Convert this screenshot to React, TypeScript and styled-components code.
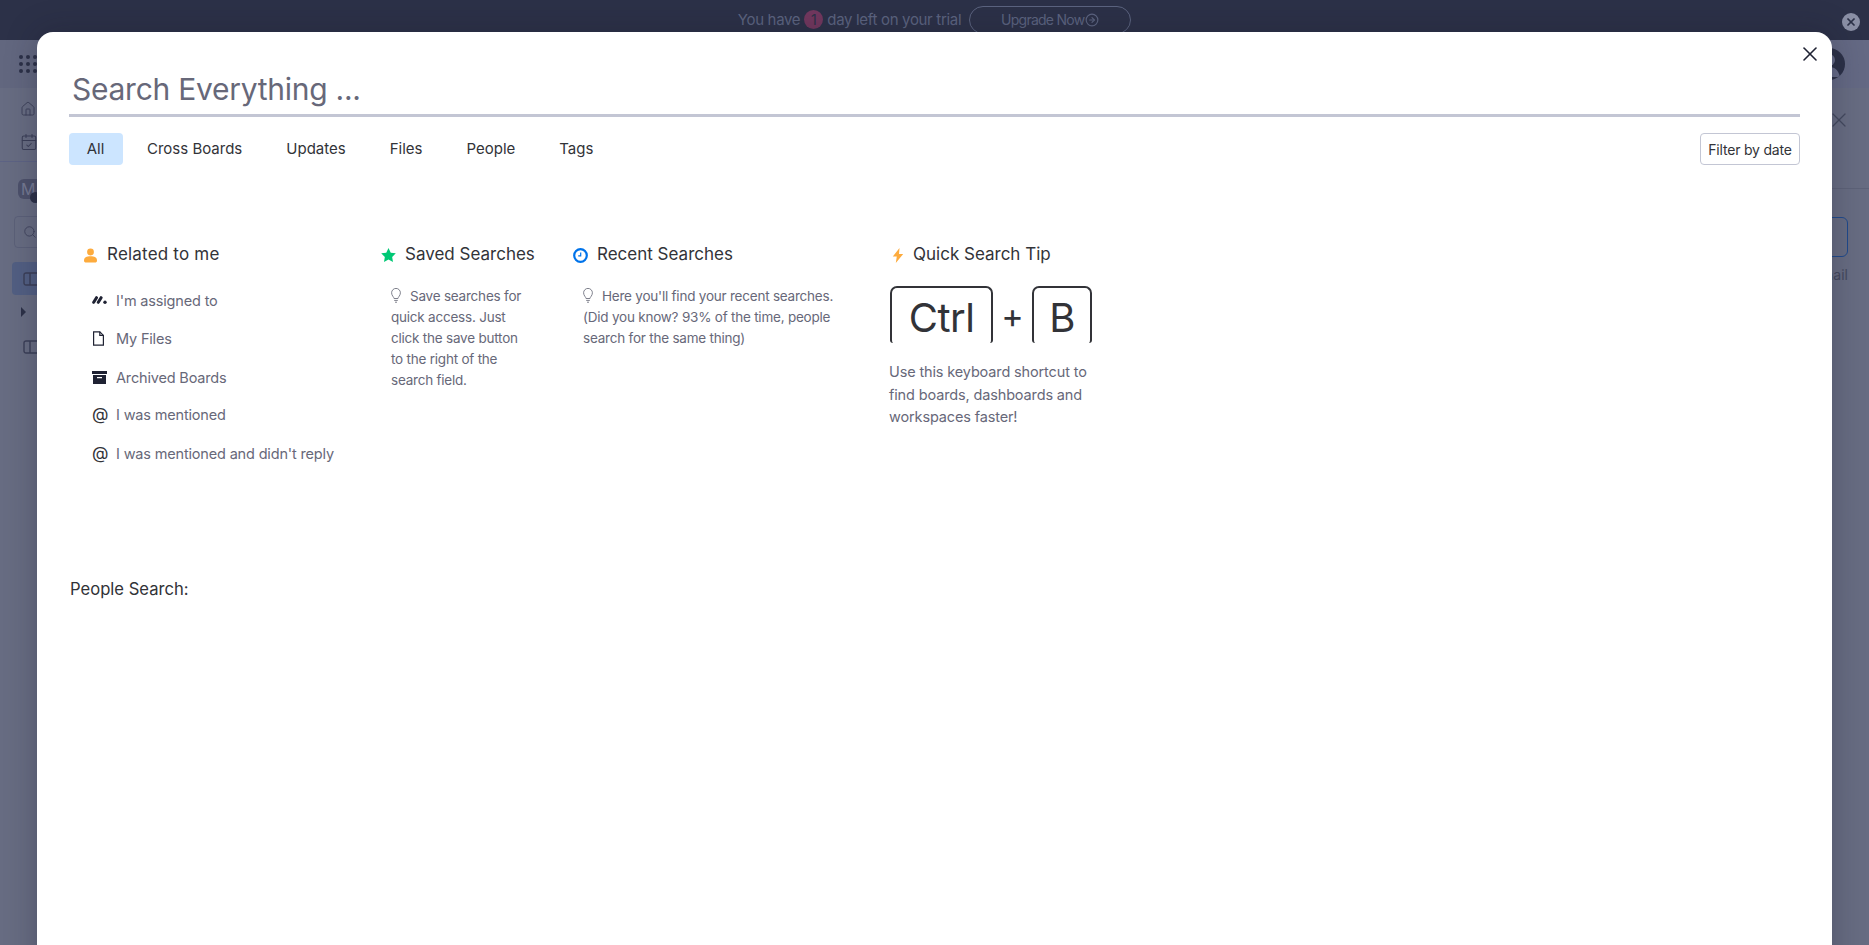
import React from "react";
import styled, { createGlobalStyle } from "styled-components";
import { X, Search, Home, CalendarCheck, ArrowRightCircle } from "lucide-react";

const FONT = `"Inter", "Liberation Sans", sans-serif`;

const Global = createGlobalStyle`
  html, body { margin: 0; padding: 0; height: 100%; overflow: hidden; background: #676c82; }
  * { box-sizing: border-box; }
  #root { height: 100%; }
`;

const Page = styled.div`
  position: relative;
  width: 100%;
  height: 100vh;
  overflow: hidden;
  display: flex;
  flex-direction: column;
  font-family: ${FONT};
  background: #676c82;
`;

/* ---- dimmed app behind the dialog ---- */
const Banner = styled.div`
  height: 40px;
  flex: none;
  background: #2c3148;
  color: #5c6480;
  display: flex;
  align-items: flex-start;
  justify-content: center;
  padding: 6px 0 0 0;
  font-size: 15px;
  position: relative;
`;
const BannerText = styled.div`
  display: flex;
  align-items: center;
  height: 28px;
  padding-bottom: 1px;
  gap: 4px;
  letter-spacing: -0.32px;
  margin-right: 8px;
`;
const DayBadge = styled.span`
  width: 19px;
  height: 19px;
  border-radius: 50%;
  background: #73385f;
  color: #2c3148;
  display: flex;
  align-items: center;
  justify-content: center;
  font-size: 14px;
`;
const UpgradeButton = styled.div`
  width: 162px;
  height: 28px;
  padding-bottom: 1px;
  border: 1px solid #5c6480;
  border-radius: 14px;
  display: flex;
  align-items: center;
  justify-content: center;
  gap: 1px;
  font-size: 14px;
  letter-spacing: -0.75px;
`;
const BannerDismiss = styled.div`
  position: absolute;
  right: 9px;
  top: 13px;
  width: 18px;
  height: 18px;
  border-radius: 50%;
  background: #8a8fa5;
  color: #2c3148;
  display: flex;
  align-items: center;
  justify-content: center;
`;
const AppHeader = styled.div`
  height: 48px;
  flex: none;
  background: linear-gradient(90deg, #62677f 0%, #646984 100%);
  display: flex;
  align-items: center;
  justify-content: space-between;
  padding: 0 24px 0 19px;
`;
const DotGrid = styled.div`
  display: grid;
  grid-template-columns: repeat(3, 4px);
  gap: 3px;
  span {
    width: 4px;
    height: 4px;
    border-radius: 50%;
    background: #2c3148;
  }
`;
const Avatar = styled.div`
  width: 32px;
  height: 32px;
  border-radius: 50%;
  background: #2c3148;
  overflow: hidden;
  display: flex;
`;
const AppBody = styled.div`
  flex: 1;
  display: flex;
  min-height: 0;
`;
const Sidebar = styled.aside`
  width: 300px;
  flex: none;
  color: #3b3f58;
  display: flex;
  flex-direction: column;
`;
const NavGroup = styled.div`
  display: flex;
  flex-direction: column;
  gap: 16px;
  padding: 13px 0 10px 20px;
  border-bottom: 1px solid #5d6384;
`;
const WorkspaceTile = styled.div`
  position: relative;
  margin: 17px 0 0 18px;
  width: 28px;
  height: 20px;
  border-radius: 6px;
  background: #4d516b;
  color: #757a93;
  font-size: 16px;
  line-height: 20px;
  padding-left: 3px;
`;
const HomeBadge = styled.span`
  position: absolute;
  left: 12px;
  top: 13px;
  width: 11px;
  height: 11px;
  border-radius: 50%;
  background: #2c3148;
`;
const SideSearch = styled.div`
  margin: 17px 14px 0;
  height: 32px;
  border: 1px solid #5b6079;
  border-radius: 4px;
  display: flex;
  align-items: center;
  padding-left: 8px;
`;
const BoardRow = styled.div<{ $active?: boolean }>`
  margin: ${(p) => (p.$active ? "14px" : "0")} 12px 0;
  height: 33px;
  border-radius: 4px;
  background: ${(p) => (p.$active ? "#525f83" : "transparent")};
  display: flex;
  align-items: center;
  padding-left: 11px;
`;
const Caret = styled.div`
  margin: 12px 0 13px 21px;
  width: 0;
  height: 0;
  border-top: 5px solid transparent;
  border-bottom: 5px solid transparent;
  border-left: 5px solid #2c3148;
`;
const AppMain = styled.main`
  flex: 1;
  display: flex;
  flex-direction: column;
  align-items: flex-end;
  color: #44495f;
`;
const MainClose = styled.div`
  height: 101px;
  width: 100%;
  border-bottom: 1px solid #5d6278;
  display: flex;
  justify-content: flex-end;
  padding: 20px 18px 0 0;
`;
const MainInput = styled.div`
  margin: 28px 21px 0 0;
  width: 120px;
  height: 40px;
  border: 1px solid #204a8c;
  border-radius: 6px;
`;
const MainHint = styled.div`
  margin: 9px 21px 0 0;
  font-size: 14px;
  line-height: 18px;
`;

/* ---- dialog ---- */
const Dialog = styled.section`
  position: absolute;
  left: 37px;
  right: 37px;
  top: 32px;
  bottom: -40px;
  background: #fff;
  border-radius: 16px;
  box-shadow: 0 0 32px rgba(20, 22, 35, 0.28);
  padding: 32px 32px 0;
  color: #323338;
`;
const DialogClose = styled.button`
  position: absolute;
  top: 10px;
  right: 10px;
  width: 24px;
  height: 24px;
  border: 0;
  padding: 0;
  background: none;
  color: #1f2233;
  display: flex;
  align-items: center;
  justify-content: center;
`;
const SearchField = styled.div`
  height: 53px;
  border-bottom: 3px solid #c3c6d4;
  padding-left: 3px;
  font-size: 30px;
  line-height: 50px;
  color: #676879;
  letter-spacing: -0.26px;
`;
const TabBar = styled.div`
  margin-top: 16px;
  display: flex;
  align-items: center;
  justify-content: space-between;
`;
const Tabs = styled.div`
  display: flex;
  gap: 10px;
`;
const Tab = styled.div<{ $active?: boolean }>`
  height: 32px;
  padding: ${(p) => (p.$active ? "0 1px 1px 0" : "0 20px 1px 14px")};
  width: ${(p) => (p.$active ? "54px" : "auto")};
  justify-content: center;
  border-radius: 4px;
  display: flex;
  align-items: center;
  font-size: 15px;
  color: #323338;
  background: ${(p) => (p.$active ? "#cce5ff" : "transparent")};
`;
const FilterButton = styled.div`
  width: 100px;
  height: 32px;
  border: 1px solid #c3c6d4;
  border-radius: 4px;
  display: flex;
  align-items: center;
  justify-content: center;
  font-size: 14px;
  letter-spacing: -0.2px;
  color: #323338;
  white-space: nowrap;
`;
const Columns = styled.div`
  margin-top: 76px;
  padding-left: 15px;
  display: flex;
  align-items: flex-start;
`;
const Column = styled.div<{ $width: number }>`
  width: ${(p) => p.$width}px;
  flex: none;
`;
const Heading = styled.h3<{ $track?: number }>`
  margin: 0;
  height: 26px;
  display: flex;
  align-items: center;
  font-size: 17px;
  font-weight: 400;
  letter-spacing: ${(p) => p.$track ?? 0}px;
  color: #323338;
  white-space: nowrap;
`;
const HeadingIcon = styled.span<{ $width: number; $inset?: number }>`
  width: ${(p) => p.$width}px;
  padding-left: ${(p) => p.$inset ?? 0}px;
  flex: none;
  display: flex;
  align-items: center;
  padding-top: 2px;
`;
const List = styled.div`
  margin-top: 14px;
  padding-left: 8px;
`;
const ListRow = styled.div<{ $height: number }>`
  height: ${(p) => p.$height}px;
  display: flex;
  align-items: center;
  font-size: 14.5px;
  letter-spacing: -0.17px;
  color: #676879;
  white-space: nowrap;
`;
const RowIcon = styled.span`
  width: 24px;
  flex: none;
  display: flex;
  align-items: center;
  color: #323338;
  font-size: 17px;
  line-height: 1;
`;
const Hint = styled.p<{ $width: number }>`
  margin: 19px 0 0 10px;
  width: ${(p) => p.$width}px;
  font-size: 13.5px;
  letter-spacing: -0.22px;
  line-height: 21px;
  color: #676879;
`;
const BulbSlot = styled.svg`
  display: inline-block;
  vertical-align: -2px;
  margin-right: 9px;
`;
const KeyRow = styled.div`
  margin-top: 19px;
  display: flex;
  align-items: flex-start;
  color: #323338;
`;
const Key = styled.div<{ $width: number }>`
  width: ${(p) => p.$width}px;
  height: 57px;
  border: 2px solid #323338;
  border-bottom: 0;
  border-radius: 7px 7px 3px 3px;
  font-size: 40px;
  line-height: 59px;
  text-align: center;
  letter-spacing: -0.5px;
`;
const Plus = styled.div`
  width: 39px;
  height: 57px;
  font-size: 34px;
  line-height: 59px;
  text-align: center;
`;
const TipText = styled.p`
  margin: 18px 0 0 -1px;
  width: 210px;
  font-size: 14.5px;
  letter-spacing: -0.14px;
  line-height: 22.5px;
  color: #676879;
`;
const PeopleTitle = styled.div`
  padding: 103px 0 0 1px;
  font-size: 16.6px;
  line-height: 22px;
  color: #323338;
`;

const Bulb = () => (
  <BulbSlot width="10" height="15" viewBox="0 0 10 15" fill="none" stroke="#7f808c" strokeWidth="1">
    <path d="M3 10.5C3 9 .6 7.8 .6 4.8a4.4 4.4 0 0 1 8.8 0C9.4 7.8 7 9 7 10.5Z" />
    <path d="M3.2 12.4h3.6M4 14.2h2" />
  </BulbSlot>
);
const BoardGlyph = () => (
  <svg width="28" height="14" viewBox="0 0 28 14" fill="none" stroke="#3b3f58" strokeWidth="1.4">
    <rect x="1" y="1" width="26" height="12" rx="2" />
    <path d="M7 1v12" />
  </svg>
);

export default function App() {
  const dots = Array.from({ length: 9 });
  return (
    <Page>
      <Global />
      <Banner>
        <BannerText>
          You have <DayBadge>1</DayBadge> day left on your trial
        </BannerText>
        <UpgradeButton>
          Upgrade Now
          <ArrowRightCircle size={14} strokeWidth={2} />
        </UpgradeButton>
        <BannerDismiss>
          <X size={12} strokeWidth={3.5} />
        </BannerDismiss>
      </Banner>
      <AppHeader>
        <DotGrid>
          {dots.map((_, i) => (
            <span key={i} />
          ))}
        </DotGrid>
        <Avatar>
          <svg width="32" height="32" viewBox="0 0 32 32">
            <circle cx="16" cy="12" r="6" fill="#666b88" />
            <path d="M5 29c2-8 6-10 11-10s9 2 11 10Z" fill="#666b88" />
          </svg>
        </Avatar>
      </AppHeader>
      <AppBody>
        <Sidebar>
          <NavGroup>
            <Home size={16} strokeWidth={1.4} />
            <CalendarCheck size={18} strokeWidth={1.4} />
          </NavGroup>
          <WorkspaceTile>
            M
            <HomeBadge />
          </WorkspaceTile>
          <SideSearch>
            <Search size={14} strokeWidth={1.4} />
          </SideSearch>
          <BoardRow $active>
            <BoardGlyph />
          </BoardRow>
          <Caret />
          <BoardRow>
            <BoardGlyph />
          </BoardRow>
        </Sidebar>
        <AppMain>
          <MainClose>
            <X size={24} strokeWidth={1.2} />
          </MainClose>
          <MainInput />
          <MainHint>Email</MainHint>
        </AppMain>
      </AppBody>

      <Dialog>
        <DialogClose aria-label="Close">
          <X size={24} strokeWidth={1.6} />
        </DialogClose>
        <SearchField>Search Everything ...</SearchField>
        <TabBar>
          <Tabs>
            <Tab $active>All</Tab>
            <Tab>Cross Boards</Tab>
            <Tab>Updates</Tab>
            <Tab>Files</Tab>
            <Tab>People</Tab>
            <Tab>Tags</Tab>
          </Tabs>
          <FilterButton>Filter by date</FilterButton>
        </TabBar>
        <Columns>
          <Column $width={297}>
            <Heading $track={0.2}>
              <HeadingIcon $width={23}>
                <svg width="13" height="15" viewBox="0 0 13 15" fill="#fdab3d">
                  <circle cx="6.5" cy="4" r="3.4" />
                  <path d="M0 12.5C0 9.5 2.5 8.2 6.5 8.2s6.5 1.3 6.5 4.3c0 1.4-.8 2-2 2H2c-1.200 0-2-.6-2-2Z" />
                </svg>
              </HeadingIcon>
              Related to me
            </Heading>
            <List>
              <ListRow $height={38}>
                <RowIcon>
                  <svg width="15" height="8" viewBox="0 0 15 8" fill="none" stroke="#1f2233" strokeWidth="3" strokeLinecap="round">
                    <path d="M1.700 6.300 4.500 1.700M6.300 6.300 9.100 1.700" />
                    <circle cx="13" cy="6.200" r="1.700" fill="#1f2233" stroke="none" />
                  </svg>
                </RowIcon>
                I'm assigned to
              </ListRow>
              <ListRow $height={38}>
                <RowIcon>
                  <svg width="13" height="15" viewBox="0 0 13 15" fill="none" stroke="#1f2233" strokeWidth="1.2">
                    <path d="M1.600 .8h6.200l3.600 3.600v9.800H1.600Z" />
                    <path d="M7.800 .8v3.600h3.600" />
                  </svg>
                </RowIcon>
                My Files
              </ListRow>
              <ListRow $height={40}>
                <RowIcon>
                  <svg width="15" height="13" viewBox="0 0 15 13" fill="#1f2233">
                    <rect x="0" y="0" width="15" height="3" />
                    <path d="M1 4h13v9H1Zm4 2v1.300h5V6Z" fillRule="evenodd" />
                  </svg>
                </RowIcon>
                Archived Boards
              </ListRow>
              <ListRow $height={34}>
                <RowIcon>@</RowIcon>I was mentioned
              </ListRow>
              <ListRow $height={44}>
                <RowIcon>@</RowIcon>I was mentioned and didn't reply
              </ListRow>
            </List>
          </Column>
          <Column $width={192}>
            <Heading>
              <HeadingIcon $width={24}>
                <svg width="15" height="14" viewBox="0 0 24 23" fill="#00c875">
                  <path d="M12 0l3.700 7.600 8.300 1.200-6 5.900 1.400 8.300L12 19l-7.400 4L6 14.700 0 8.800l8.300-1.200Z" />
                </svg>
              </HeadingIcon>
              Saved Searches
            </Heading>
            <Hint $width={136}>
              <Bulb />
              Save searches for quick access. Just click the save button to the right of the search field.
            </Hint>
          </Column>
          <Column $width={317}>
            <Heading>
              <HeadingIcon $width={24}>
                <svg width="15" height="15" viewBox="0 0 15 15" fill="none" stroke="#0073ea">
                  <circle cx="7.500" cy="7.500" r="6.300" strokeWidth="2.200" />
                  <path d="M7.700 4.500v3.300H5.200" strokeWidth="1.200" />
                </svg>
              </HeadingIcon>
              Recent Searches
            </Heading>
            <Hint $width={262}>
              <Bulb />
              Here you'll find your recent searches. (Did you know? 93% of the time, people search for the same thing)
            </Hint>
          </Column>
          <Column $width={210}>
            <Heading>
              <HeadingIcon $width={23} $inset={2}>
                <svg width="12" height="15" viewBox="0 0 12 15" fill="#fdab3d">
                  <path d="M7.500 0 .8 8.500h4L3.800 15 11.200 6H7Z" />
                </svg>
              </HeadingIcon>
              Quick Search Tip
            </Heading>
            <KeyRow>
              <Key $width={103}>Ctrl</Key>
              <Plus>+</Plus>
              <Key $width={60}>B</Key>
            </KeyRow>
            <TipText>Use this keyboard shortcut to find boards, dashboards and workspaces faster!</TipText>
          </Column>
        </Columns>
        <PeopleTitle>People Search:</PeopleTitle>
      </Dialog>
    </Page>
  );
}
